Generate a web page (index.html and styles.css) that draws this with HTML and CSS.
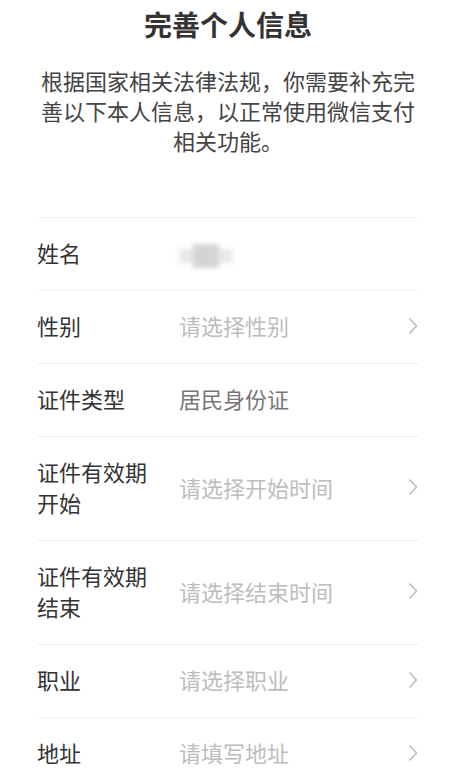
FILE: index.html
```html
<!DOCTYPE html>
<html lang="zh-CN">
<head>
<meta charset="utf-8">
<title>完善个人信息</title>
<link rel="stylesheet" href="styles.css">
</head>
<body>
<main class="page">
  <h1 class="title">完善个人信息</h1>
  <p class="intro">根据国家相关法律法规，你需要补充完善以下本人信息，以正常使用微信支付相关功能。</p>
  <ul class="form">
    <li class="row">
      <span class="label">姓名</span>
      <span class="value"><span class="blur-name"><span class="blur-core"></span></span></span>
    </li>
    <li class="row">
      <span class="label">性别</span>
      <span class="value placeholder">请选择性别</span>
      <svg class="chev" viewBox="0 0 10 18" width="10" height="18"><path d="M1.5 1.5 L8.5 9 L1.5 16.5"/></svg>
    </li>
    <li class="row">
      <span class="label">证件类型</span>
      <span class="value filled">居民身份证</span>
    </li>
    <li class="row">
      <span class="label">证件有效期开始</span>
      <span class="value placeholder">请选择开始时间</span>
      <svg class="chev" viewBox="0 0 10 18" width="10" height="18"><path d="M1.5 1.5 L8.5 9 L1.5 16.5"/></svg>
    </li>
    <li class="row">
      <span class="label">证件有效期结束</span>
      <span class="value placeholder">请选择结束时间</span>
      <svg class="chev" viewBox="0 0 10 18" width="10" height="18"><path d="M1.5 1.5 L8.5 9 L1.5 16.5"/></svg>
    </li>
    <li class="row">
      <span class="label">职业</span>
      <span class="value placeholder">请选择职业</span>
      <svg class="chev" viewBox="0 0 10 18" width="10" height="18"><path d="M1.5 1.5 L8.5 9 L1.5 16.5"/></svg>
    </li>
    <li class="row">
      <span class="label">地址</span>
      <span class="value placeholder">请填写地址</span>
      <svg class="chev" viewBox="0 0 10 18" width="10" height="18"><path d="M1.5 1.5 L8.5 9 L1.5 16.5"/></svg>
    </li>
  </ul>
</main>
</body>
</html>
```
FILE: styles.css
```css
html, body {
  margin: 0;
  padding: 0;
  background: #ffffff;
}
body {
  font-family: "Noto Sans CJK SC", "Noto Sans", sans-serif;
  color: #333333;
}
.page {
  padding: 4px 52px 0 37px;
}
.title {
  margin: 0;
  font-size: 28px;
  line-height: 40px;
  font-weight: 700;
  text-align: center;
  color: #333333;
}
.intro {
  margin: 21px 0 0;
  font-size: 22px;
  line-height: 30px;
  text-align: center;
  color: #444444;
}
.form {
  list-style: none;
  margin: 62px 0 0;
  padding: 0;
  border-top: 1px solid #f0f0f0;
}
.row {
  display: flex;
  align-items: center;
  padding: 19px 0 22px;
  border-bottom: 1px solid #f0f0f0;
  font-size: 22px;
  line-height: 31px;
}
.label {
  flex: 0 0 120px;
  margin-right: 22px;
  color: #333333;
}
.value {
  flex: 1;
  min-height: 31px;
}
.placeholder {
  color: #bdbdbd;
}
.filled {
  color: #777777;
}
.chev {
  flex: 0 0 auto;
  margin-right: 1px;
}
.chev path {
  fill: none;
  stroke: #bdbdbd;
  stroke-width: 1.6;
}
.blur-name {
  display: inline-block;
  position: relative;
  vertical-align: middle;
  width: 54px;
  height: 14px;
  background: #e9e9e9;
  filter: blur(2.5px);
}
.blur-core {
  position: absolute;
  left: 14px;
  top: -5px;
  width: 26px;
  height: 24px;
  background: #d4d4d4;
}
```
